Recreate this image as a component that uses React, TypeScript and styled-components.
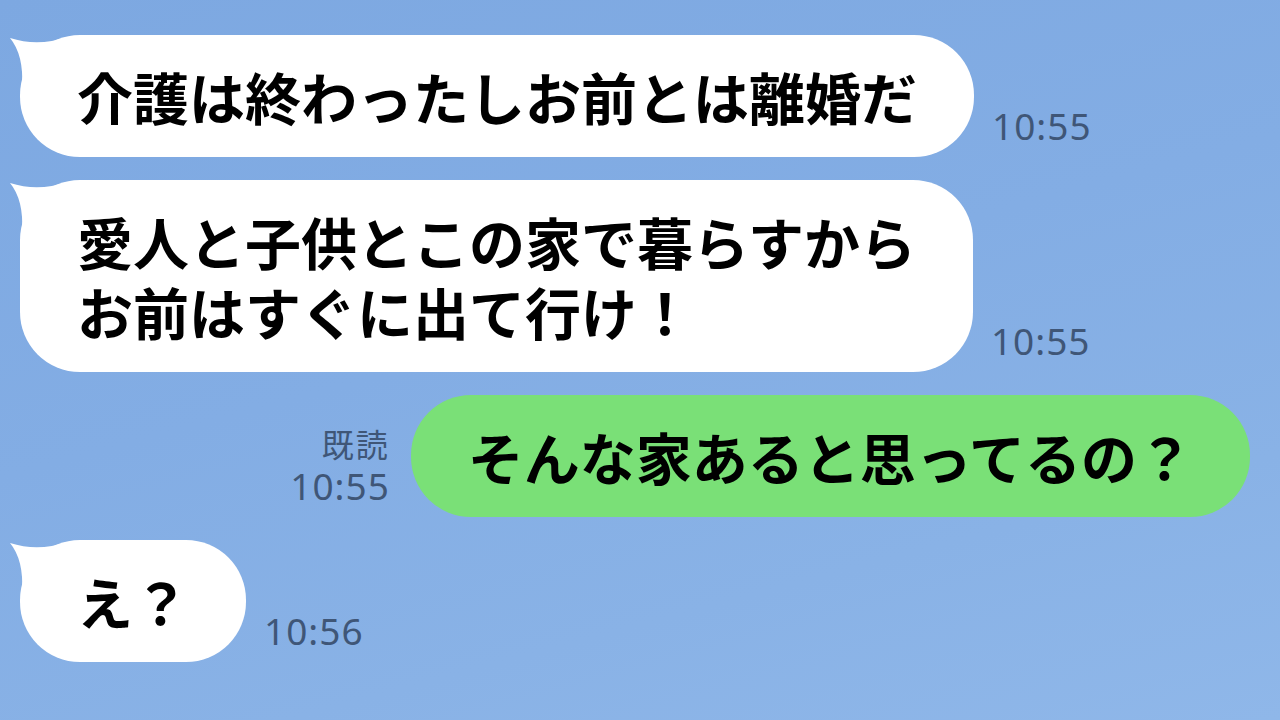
import React from "react";
import styled, { createGlobalStyle } from "styled-components";

const GlobalStyle = createGlobalStyle`
  html, body {
    margin: 0;
    padding: 0;
  }
  body {
    font-family: "Noto Sans CJK JP", "Noto Sans", sans-serif;
  }
`;

type Msg = {
  side: "left" | "right";
  lines: string[];
  time: string;
  read?: boolean;
};

const messages: Msg[] = [
  { side: "left", lines: ["介護は終わったしお前とは離婚だ"], time: "10:55" },
  {
    side: "left",
    lines: ["愛人と子供とこの家で暮らすから", "お前はすぐに出て行け！"],
    time: "10:55",
  },
  { side: "right", lines: ["そんな家あると思ってるの？"], time: "10:55", read: true },
  { side: "left", lines: ["え？"], time: "10:56" },
];

const Tail = () => (
  <TailSvg width="70" height="60" viewBox="0 0 70 60">
    <path d="M2 3 Q30 12 59 2 L62 52 L14 52 Q16 20 2 3 Z" fill="#ffffff" />
  </TailSvg>
);

const App = () => {
  return (
    <Screen>
      <GlobalStyle />
      {messages.map((m, i) =>
        m.side === "left" ? (
          <LeftRow key={i}>
            <Bubble>
              <Tail />
              {m.lines.map((l, j) => (
                <Line key={j}>{l}</Line>
              ))}
            </Bubble>
            <Meta>
              <Time>{m.time}</Time>
            </Meta>
          </LeftRow>
        ) : (
          <RightRow key={i}>
            <Meta $align="right">
              {m.read && <Read>既読</Read>}
              <Time>{m.time}</Time>
            </Meta>
            <Bubble $mine>
              {m.lines.map((l, j) => (
                <Line key={j}>{l}</Line>
              ))}
            </Bubble>
          </RightRow>
        )
      )}
    </Screen>
  );
};

export default App;

const Screen = styled.div`
  width: 1280px;
  height: 720px;
  overflow: hidden;
  box-sizing: border-box;
  padding-top: 35px;
  display: flex;
  flex-direction: column;
  gap: 23px;
  background: linear-gradient(165deg, #7da8e1 0%, #83ade4 45%, #89b2e6 75%, #8fb7e9 100%);
`;

const LeftRow = styled.div`
  display: flex;
  align-items: flex-end;
  padding-left: 20px;
  gap: 18px;
`;

const RightRow = styled.div`
  display: flex;
  align-items: flex-end;
  justify-content: flex-end;
  padding-right: 30px;
  gap: 21px;
`;

const Bubble = styled.div<{ $mine?: boolean }>`
  position: relative;
  background: ${(p) => (p.$mine ? "#7ae077" : "#ffffff")};
  border-radius: 60px;
  padding: 26px 57px 26px 57px;
  color: #000;
  font-family: "Noto Sans CJK JP", sans-serif;
  font-weight: 700;
  font-size: 56px;
  line-height: 70px;
  white-space: nowrap;
`;

const TailSvg = styled.svg`
  position: absolute;
  left: -12px;
  top: 0;
`;

const Line = styled.div`
  position: relative;
`;

const Meta = styled.div<{ $align?: string }>`
  display: flex;
  flex-direction: column;
  align-items: ${(p) => (p.$align === "right" ? "flex-end" : "flex-start")};
  padding-bottom: 11px;
  color: #3f5677;
`;

const Read = styled.div`
  font-family: "Noto Sans CJK JP", sans-serif;
  font-size: 32px;
  line-height: 46px;
  letter-spacing: 2px;
`;

const Time = styled.div`
  font-family: "Noto Sans", "Noto Sans CJK JP", sans-serif;
  font-size: 37px;
  line-height: 40px;
  letter-spacing: 1px;
`;
